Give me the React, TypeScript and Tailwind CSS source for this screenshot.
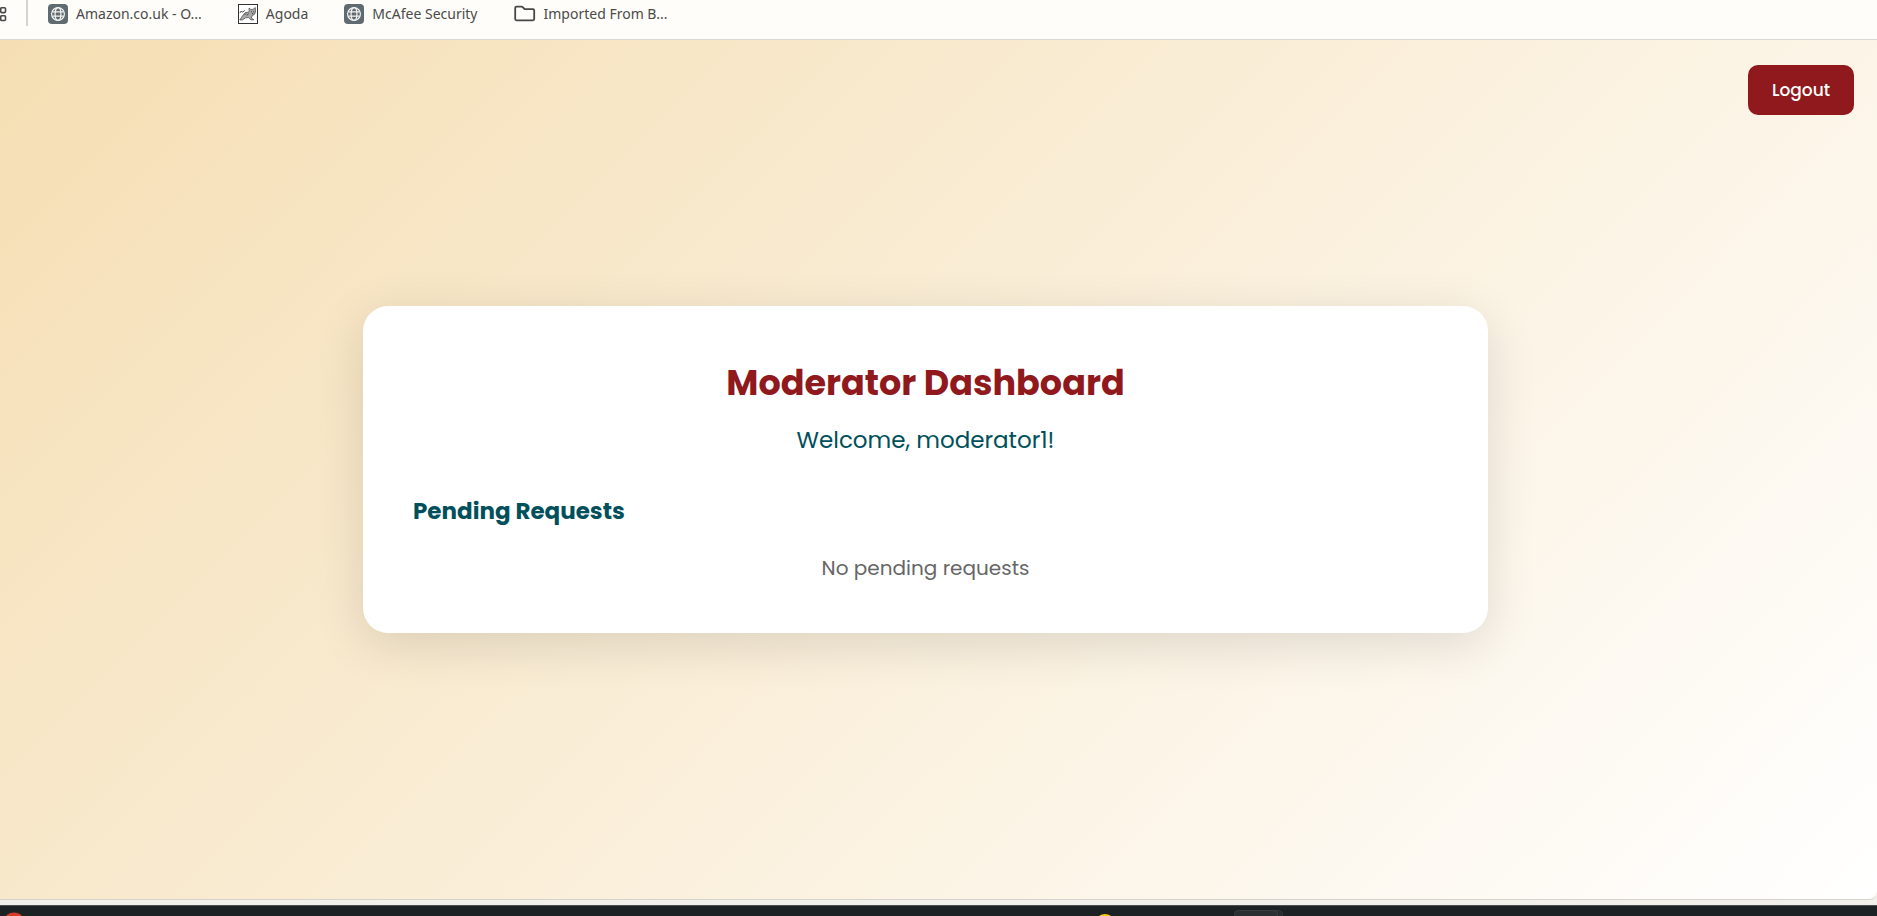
import React from "react";

function GlobeIcon() {
  return (
    <svg viewBox="0 0 20 20" className="size-5 shrink-0" aria-hidden="true">
      <rect width="20" height="20" rx="4" fill="#5f6b70" />
      <g fill="none" stroke="#f4f4f2" strokeWidth="1.2">
        <circle cx="10" cy="10" r="6.4" />
        <ellipse cx="10" cy="10" rx="2.9" ry="6.4" />
        <path d="M4.4 7.8h11.2M4.4 12.2h11.2" />
      </g>
    </svg>
  );
}

function AgodaIcon() {
  return (
    <svg viewBox="0 0 20 20" className="size-5 shrink-0" aria-hidden="true">
      <rect x="0.5" y="0.5" width="19" height="19" fill="#fff" stroke="#333" />
      <path
        d="M11 4l1.8 1.4h2.200L17.300 3.500l.2 4.500-1.200 2.600-2 .8-1 2.600 2.600 1.800h-3l-2.400-2.200-3 .2-3.200 2.200H1.800l2.600-4L7 8.800l4.200-1z"
        fill="#a9a9a9"
        stroke="#444"
        strokeWidth="0.700"
      />
      <path
        d="M1.800 9l1.500-2 1 1.200 2.500-1.700M6.500 11l1.500-1.500M9 11.500l1.500-2M13 7.800h1M15.200 7.800h1M14 9.600h1.200"
        fill="none"
        stroke="#333"
        strokeWidth="0.900"
      />
    </svg>
  );
}

function FolderIcon() {
  return (
    <svg viewBox="0 0 22 20" className="h-5 w-[22px] shrink-0" aria-hidden="true">
      <path
        d="M1.200 3.900c0-.8.5-1.200 1.200-1.200h5.100c.6 0 1 .2 1.400.6l1.700 1.900h8.400c.8 0 1.200.5 1.200 1.200v8.700c0 .8-.5 1.200-1.200 1.200H2.400c-.8 0-1.200-.5-1.200-1.200z"
        fill="none"
        stroke="#474747"
        strokeWidth="1.800"
      />
    </svg>
  );
}

function Bookmark({ icon, children }: { icon: React.ReactNode; children: string }) {
  return (
    <a href="#" className="flex items-start gap-2 whitespace-nowrap">
      <span className="pt-1">{icon}</span>
      <span className="leading-[27px]">{children}</span>
    </a>
  );
}

function BookmarksBar() {
  return (
    <nav
      aria-label="Bookmarks"
      className="flex h-10 items-start border-b border-[#d8d8d0] bg-[#fefdf9] font-['Noto_Sans',sans-serif] text-[14px] text-[#4a4a4a]"
    >
      <button type="button" aria-label="Apps" className="flex h-7 w-[7px] items-center justify-end overflow-hidden">
        <svg viewBox="0 0 16 16" className="size-4 shrink-0" fill="none" stroke="#474747" strokeWidth="1.600" aria-hidden="true">
          <rect x="1.500" y="1.800" width="4.800" height="4.800" rx="1" />
          <rect x="9.700" y="1.800" width="4.800" height="4.800" rx="1" />
          <rect x="1.500" y="9.700" width="4.800" height="4.800" rx="1" />
          <rect x="9.700" y="9.700" width="4.800" height="4.800" rx="1" />
        </svg>
      </button>
      <span className="ml-[19px] h-[26px] w-0.5 bg-[#d5d5cc]" />
      <div className="ml-5 flex gap-9">
        <Bookmark icon={<GlobeIcon />}>Amazon.co.uk - O...</Bookmark>
        <Bookmark icon={<AgodaIcon />}>Agoda</Bookmark>
        <Bookmark icon={<GlobeIcon />}>McAfee Security</Bookmark>
        <Bookmark icon={<FolderIcon />}>Imported From B...</Bookmark>
      </div>
    </nav>
  );
}

function Dashboard() {
  return (
    <main className="flex flex-1 flex-col rounded-br-lg border-b border-[#d5d3cc] bg-[linear-gradient(135deg,#f5deb3_0%,#ffffff_100%)] font-['Poppins',sans-serif]">
      <header className="flex h-[75px] items-end justify-end pr-[23px]">
        <button type="button" className="h-[50px] rounded-[10px] bg-[#8f191c] px-6 pt-0.5 text-[17px] font-medium text-white">
          Logout
        </button>
      </header>
      <div className="flex flex-1 items-center justify-center pr-[26px] pb-[75px]">
        <section className="w-full max-w-[1125px] rounded-[25px] bg-white px-[50px] pt-[52px] pb-[49px] text-center shadow-[0_12px_50px_rgba(0,0,0,0.12)]">
          <h1 className="text-[35px] leading-[50px] font-bold text-[#8f191c]">Moderator Dashboard</h1>
          <p className="mt-[14px] text-[23px] leading-9 text-[#00505c]">Welcome, moderator1!</p>
          <h2 className="mt-[35px] text-left text-[23px] leading-9 font-bold text-[#00505c]">Pending Requests</h2>
          <p className="mt-[23px] text-[20px] leading-8 text-[#666666]">No pending requests</p>
        </section>
      </div>
    </main>
  );
}

function Taskbar() {
  return (
    <footer className="flex h-[11px] items-end overflow-hidden border-t border-[#4a4e4e] bg-[#1c2223]">
      <svg viewBox="0 0 1877 10" className="h-2.5 w-full" preserveAspectRatio="none" aria-hidden="true">
        <circle cx="14" cy="17.500" r="11" fill="#d53a2c" />
        <circle cx="1105" cy="18" r="10" fill="#fdc20a" />
        <rect x="1239.500" y="4.500" width="43" height="20" rx="4" fill="#262c2d" stroke="#33393a" />
        <rect x="1234.500" y="4.500" width="43" height="20" rx="4" fill="#2a3031" stroke="#3a4042" />
      </svg>
    </footer>
  );
}

export default function App() {
  return (
    <div className="flex min-h-screen flex-col bg-[#f2f0eb]">
      <BookmarksBar />
      <Dashboard />
      <div className="h-[5px]" />
      <Taskbar />
    </div>
  );
}
